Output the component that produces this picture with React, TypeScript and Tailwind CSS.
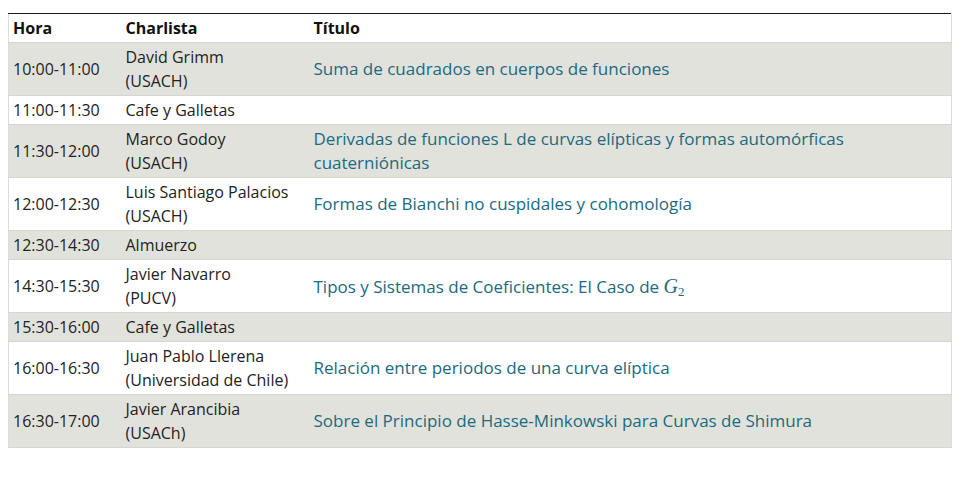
const rows: { hora: string; charlista: string[]; titulo?: React.ReactNode }[] = [
    { hora: '10:00-11:00', charlista: ['David Grimm', '(USACH)'], titulo: 'Suma de cuadrados en cuerpos de funciones' },
    { hora: '11:00-11:30', charlista: ['Cafe y Galletas'] },
    {
        hora: '11:30-12:00',
        charlista: ['Marco Godoy', '(USACH)'],
        titulo: 'Derivadas de funciones L de curvas elípticas y formas automórficas cuaterniónicas',
    },
    { hora: '12:00-12:30', charlista: ['Luis Santiago Palacios', '(USACH)'], titulo: 'Formas de Bianchi no cuspidales y cohomología' },
    { hora: '12:30-14:30', charlista: ['Almuerzo'] },
    {
        hora: '14:30-15:30',
        charlista: ['Javier Navarro', '(PUCV)'],
        titulo: (
            <>
                Tipos y Sistemas de Coeficientes: El Caso de{' '}
                <span className="font-['Liberation_Serif',serif] text-[20px] italic">
                    G<sub className="text-[13px] not-italic">2</sub>
                </span>
            </>
        ),
    },
    { hora: '15:30-16:00', charlista: ['Cafe y Galletas'] },
    {
        hora: '16:00-16:30',
        charlista: ['Juan Pablo Llerena', '(Universidad de Chile)'],
        titulo: 'Relación entre periodos de una curva elíptica',
    },
    {
        hora: '16:30-17:00',
        charlista: ['Javier Arancibia', '(USACh)'],
        titulo: 'Sobre el Principio de Hasse-Minkowski para Curvas de Shimura',
    },
];

const App = () => {
    return (
        <div className="min-h-[500px] bg-white pt-[13px] pl-2 font-['Open_Sans',sans-serif] text-[#222]">
            <table className="w-[944px] table-fixed border-collapse border-x border-x-[#dcdcdc] border-t border-t-[#1a1a1a] text-left">
                <colgroup>
                    <col className="w-[112px]" />
                    <col className="w-[188px]" />
                    <col />
                </colgroup>
                <thead>
                    <tr className="border-b border-[#d6d6d2]">
                        <th className="py-[2px] pr-[5px] pl-[4px] text-[16px] leading-[24px] font-bold text-[#111]">Hora</th>
                        <th className="px-[5px] py-[2px] text-[16px] leading-[24px] font-bold text-[#111]">Charlista</th>
                        <th className="px-[5px] py-[2px] text-[16px] leading-[24px] font-bold text-[#111]">Título</th>
                    </tr>
                </thead>
                <tbody>
                    {rows.map((r, i) => (
                        <tr key={r.hora} className={`border-b border-[#d6d6d2] ${i % 2 === 0 ? 'bg-[#e2e2dc]' : 'bg-white'}`}>
                            <td className="py-[2px] pr-[5px] pl-[4px] align-middle text-[16px] leading-[24px]">{r.hora}</td>
                            <td className="px-[5px] py-[2px] align-middle text-[16px] leading-[24px]">
                                {r.charlista.map((c) => (
                                    <div key={c}>{c}</div>
                                ))}
                            </td>
                            <td className="px-[5px] py-[2px] align-middle text-[17px] leading-[24px] text-[#1b6a80]">
                                {r.titulo}
                            </td>
                        </tr>
                    ))}
                </tbody>
            </table>
        </div>
    );
};

export default App;
